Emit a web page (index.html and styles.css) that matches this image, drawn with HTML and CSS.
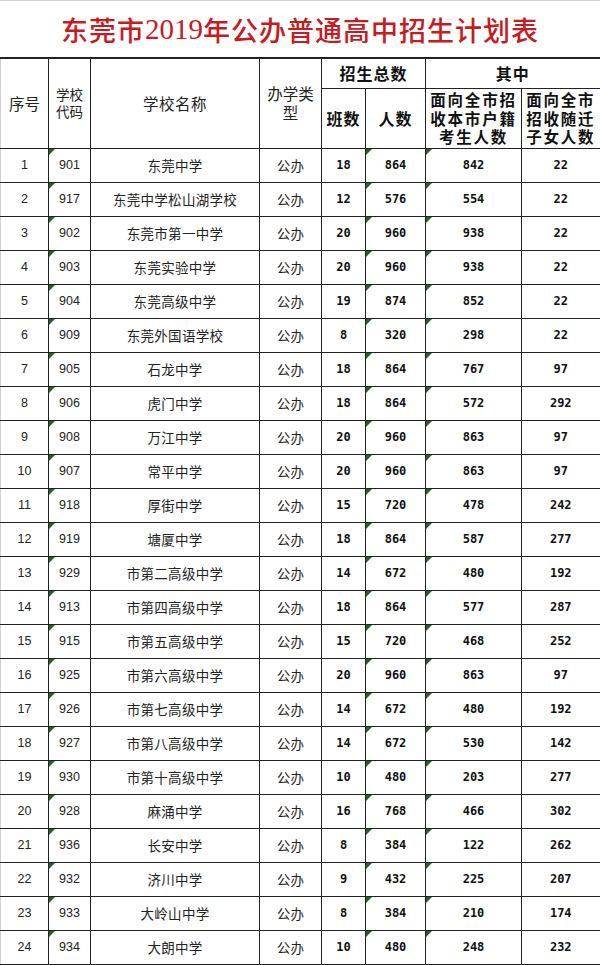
FILE: index.html
```html
<!DOCTYPE html>
<html lang="zh-CN">
<head>
<meta charset="utf-8">
<title>东莞市2019年公办普通高中招生计划表</title>
<link rel="stylesheet" href="styles.css">
</head>
<body>
<div class="sheet">
  <h1 class="title">东莞市<span class="num">2019</span>年公办普通高中招生计划表</h1>
  <table class="plan">
    <colgroup>
      <col class="c1"><col class="c2"><col class="c3"><col class="c4">
      <col class="c5"><col class="c6"><col class="c7"><col class="c8">
    </colgroup>
    <thead>
      <tr class="h1row">
        <th rowspan="2" class="hd big">序号</th>
        <th rowspan="2" class="hd small">学校<br>代码</th>
        <th rowspan="2" class="hd mid">学校名称</th>
        <th rowspan="2" class="hd big lh">办学类<br>型</th>
        <th colspan="2" class="hb">招生总数</th>
        <th colspan="2" class="hb">其中</th>
      </tr>
      <tr class="h2row">
        <th class="hb">班数</th>
        <th class="hb">人数</th>
        <th class="hb wide">面向全市招<br>收本市户籍<br>考生人数</th>
        <th class="hb wide">面向全市<br>招收随迁<br>子女人数</th>
      </tr>
    </thead>
    <tbody>
      <tr><td class="n">1</td><td class="n tri">901</td><td class="cn">东莞中学</td><td class="cn">公办</td><td class="b">18</td><td class="b tri">864</td><td class="b tri">842</td><td class="b">22</td></tr>
      <tr><td class="n">2</td><td class="n tri">917</td><td class="cn">东莞中学松山湖学校</td><td class="cn">公办</td><td class="b">12</td><td class="b tri">576</td><td class="b tri">554</td><td class="b">22</td></tr>
      <tr><td class="n">3</td><td class="n tri">902</td><td class="cn">东莞市第一中学</td><td class="cn">公办</td><td class="b">20</td><td class="b tri">960</td><td class="b tri">938</td><td class="b">22</td></tr>
      <tr><td class="n">4</td><td class="n tri">903</td><td class="cn">东莞实验中学</td><td class="cn">公办</td><td class="b">20</td><td class="b tri">960</td><td class="b tri">938</td><td class="b">22</td></tr>
      <tr><td class="n">5</td><td class="n tri">904</td><td class="cn">东莞高级中学</td><td class="cn">公办</td><td class="b">19</td><td class="b tri">874</td><td class="b tri">852</td><td class="b">22</td></tr>
      <tr><td class="n">6</td><td class="n tri">909</td><td class="cn">东莞外国语学校</td><td class="cn">公办</td><td class="b">8</td><td class="b tri">320</td><td class="b tri">298</td><td class="b">22</td></tr>
      <tr><td class="n">7</td><td class="n tri">905</td><td class="cn">石龙中学</td><td class="cn">公办</td><td class="b">18</td><td class="b tri">864</td><td class="b tri">767</td><td class="b">97</td></tr>
      <tr><td class="n">8</td><td class="n tri">906</td><td class="cn">虎门中学</td><td class="cn">公办</td><td class="b">18</td><td class="b tri">864</td><td class="b tri">572</td><td class="b">292</td></tr>
      <tr><td class="n">9</td><td class="n tri">908</td><td class="cn">万江中学</td><td class="cn">公办</td><td class="b">20</td><td class="b tri">960</td><td class="b tri">863</td><td class="b">97</td></tr>
      <tr><td class="n">10</td><td class="n tri">907</td><td class="cn">常平中学</td><td class="cn">公办</td><td class="b">20</td><td class="b tri">960</td><td class="b tri">863</td><td class="b">97</td></tr>
      <tr><td class="n">11</td><td class="n tri">918</td><td class="cn">厚街中学</td><td class="cn">公办</td><td class="b">15</td><td class="b tri">720</td><td class="b tri">478</td><td class="b">242</td></tr>
      <tr><td class="n">12</td><td class="n tri">919</td><td class="cn">塘厦中学</td><td class="cn">公办</td><td class="b">18</td><td class="b tri">864</td><td class="b tri">587</td><td class="b">277</td></tr>
      <tr><td class="n">13</td><td class="n tri">929</td><td class="cn">市第二高级中学</td><td class="cn">公办</td><td class="b">14</td><td class="b tri">672</td><td class="b tri">480</td><td class="b">192</td></tr>
      <tr><td class="n">14</td><td class="n tri">913</td><td class="cn">市第四高级中学</td><td class="cn">公办</td><td class="b">18</td><td class="b tri">864</td><td class="b tri">577</td><td class="b">287</td></tr>
      <tr><td class="n">15</td><td class="n tri">915</td><td class="cn">市第五高级中学</td><td class="cn">公办</td><td class="b">15</td><td class="b tri">720</td><td class="b tri">468</td><td class="b">252</td></tr>
      <tr><td class="n">16</td><td class="n tri">925</td><td class="cn">市第六高级中学</td><td class="cn">公办</td><td class="b">20</td><td class="b tri">960</td><td class="b tri">863</td><td class="b">97</td></tr>
      <tr><td class="n">17</td><td class="n tri">926</td><td class="cn">市第七高级中学</td><td class="cn">公办</td><td class="b">14</td><td class="b tri">672</td><td class="b tri">480</td><td class="b">192</td></tr>
      <tr><td class="n">18</td><td class="n tri">927</td><td class="cn">市第八高级中学</td><td class="cn">公办</td><td class="b">14</td><td class="b tri">672</td><td class="b tri">530</td><td class="b">142</td></tr>
      <tr><td class="n">19</td><td class="n tri">930</td><td class="cn">市第十高级中学</td><td class="cn">公办</td><td class="b">10</td><td class="b tri">480</td><td class="b tri">203</td><td class="b">277</td></tr>
      <tr><td class="n">20</td><td class="n tri">928</td><td class="cn">麻涌中学</td><td class="cn">公办</td><td class="b">16</td><td class="b tri">768</td><td class="b tri">466</td><td class="b">302</td></tr>
      <tr><td class="n">21</td><td class="n tri">936</td><td class="cn">长安中学</td><td class="cn">公办</td><td class="b">8</td><td class="b tri">384</td><td class="b tri">122</td><td class="b">262</td></tr>
      <tr><td class="n">22</td><td class="n tri">932</td><td class="cn">济川中学</td><td class="cn">公办</td><td class="b">9</td><td class="b tri">432</td><td class="b tri">225</td><td class="b">207</td></tr>
      <tr><td class="n">23</td><td class="n tri">933</td><td class="cn">大岭山中学</td><td class="cn">公办</td><td class="b">8</td><td class="b tri">384</td><td class="b tri">210</td><td class="b">174</td></tr>
      <tr><td class="n">24</td><td class="n tri">934</td><td class="cn">大朗中学</td><td class="cn">公办</td><td class="b">10</td><td class="b tri">480</td><td class="b tri">248</td><td class="b">232</td></tr>
    </tbody>
  </table>
</div>
</body>
</html>
```

FILE: styles.css
```css
html, body {
  margin: 0;
  padding: 0;
  background: #ffffff;
}

.sheet {
  width: 600px;
  font-family: "Noto Sans CJK SC", sans-serif;
  color: #111;
}

.title {
  margin: 0;
  height: 56px;
  border-top: 1px solid #cfcfcf;
  display: flex;
  align-items: center;
  justify-content: center;
  font-size: 27px;
  font-weight: 500;
  letter-spacing: 1px;
  color: #c81a1f;
  line-height: 1;
}

.title .num {
  font-family: "Liberation Serif", serif;
  font-size: 29px;
  letter-spacing: 0;
}

.plan {
  width: 600px;
  table-layout: fixed;
  border-collapse: collapse;
  border-left: 1px solid #d0d0d0;
}

.c1 { width: 48px; }
.c2 { width: 42px; }
.c3 { width: 169px; }
.c4 { width: 62px; }
.c5 { width: 44px; }
.c6 { width: 60px; }
.c7 { width: 96px; }
.c8 { width: 79px; }

.plan th,
.plan td {
  border: 1px solid #222;
  padding: 0;
  text-align: center;
  vertical-align: middle;
  overflow: visible;
  white-space: nowrap;
}

.plan tr:first-child th { border-top: 2px solid #222; }
.plan th:first-child, .plan td:first-child { border-left: 1px solid #d0d0d0; }
.plan th:last-child, .plan td:last-child { border-right: 2px solid #222; }

.h1row { height: 30px; }
.h2row { height: 60px; }
.plan tbody tr { height: 34px; }

.hd {
  font-weight: 400;
  color: #222;
}
.hd.big { font-size: 15.5px; }
.hd.small { font-size: 13.5px; line-height: 17px; }
.hd.mid { font-size: 15.5px; letter-spacing: 0.5px; }
.hd.lh { line-height: 19px; font-size: 15.5px; }

.hb {
  font-weight: 700;
  font-size: 16px;
  letter-spacing: 1px;
  color: #111;
}
.hb.wide {
  font-size: 15.5px;
  line-height: 18.5px;
  letter-spacing: 1.8px;
}

.n {
  font-family: "Liberation Sans", sans-serif;
  font-size: 12.5px;
  color: #222;
}

.cn {
  font-size: 13.5px;
  letter-spacing: 0.3px;
  color: #222;
}

.b {
  font-family: "DejaVu Sans Mono", monospace;
  font-weight: 700;
  font-size: 12px;
  color: #111;
}

.tri { position: relative; }
.tri::before {
  content: "";
  position: absolute;
  top: 0;
  left: 0;
  width: 0;
  height: 0;
  border-top: 6px solid #2b5e2b;
  border-right: 6px solid transparent;
}
```
